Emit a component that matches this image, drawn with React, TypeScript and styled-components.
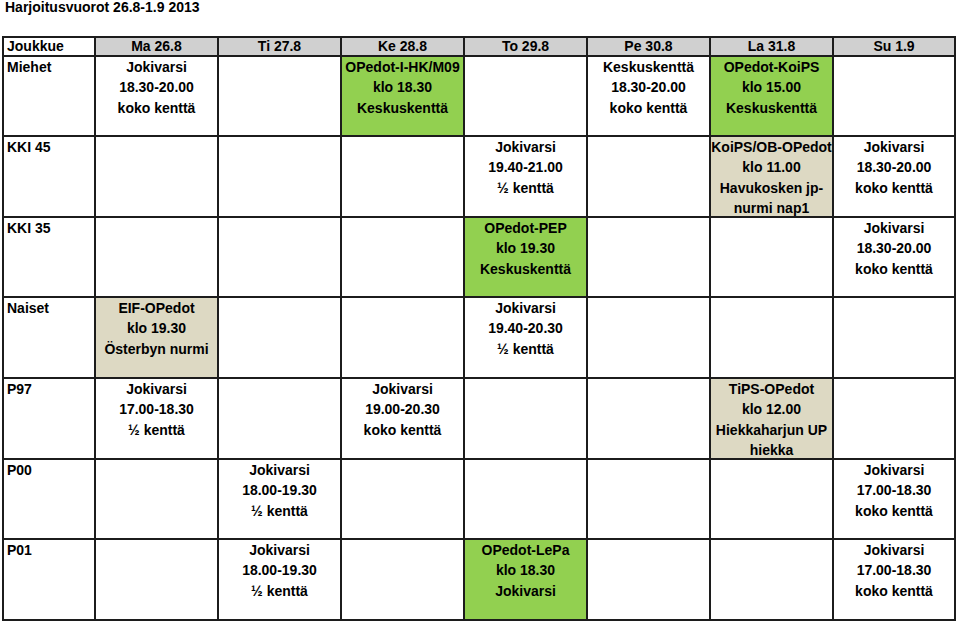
import { Fragment } from "react";
import styled, { createGlobalStyle } from "styled-components";

const GlobalStyle = createGlobalStyle`
  html, body {
    margin: 0;
    padding: 0;
    background: #ffffff;
  }
  body {
    font-family: "Liberation Sans", Arial, sans-serif;
    color: #000000;
  }
`;

const Page = styled.div`
  display: flex;
  flex-direction: column;
  align-items: flex-start;
  padding: 0 0 0 2px;
`;

const Title = styled.h1`
  margin: 0 0 22px 3px;
  font-size: 14px;
  line-height: 14px;
  font-weight: bold;
`;

const Grid = styled.div`
  display: grid;
  grid-template-columns: 92px repeat(6, 123px) 122px;
  grid-template-rows: 19px 80px 81px 80px 81px 81px 80px 81px;
  border-left: 2px solid #1c1c1c;
  border-top: 2px solid #1c1c1c;
`;

type Tone = "plain" | "green" | "tan" | "head";

const tones: Record<Tone, string> = {
  plain: "#ffffff",
  green: "#92d050",
  tan: "#ddd9c3",
  head: "#d0d0d0",
};

const Cell = styled.div<{ $tone: Tone; $left?: boolean }>`
  box-sizing: border-box;
  border-right: 2px solid #1c1c1c;
  border-bottom: 2px solid #1c1c1c;
  background: ${(p) => tones[p.$tone]};
  display: flex;
  flex-direction: column;
  align-items: ${(p) => (p.$left ? "flex-start" : "center")};
  padding-left: ${(p) => (p.$left ? "3px" : "0")};
  font-size: 14px;
  font-weight: bold;
  line-height: 20.3px;
  overflow: hidden;
`;

const HeadCell = styled(Cell)`
  line-height: 17px;
`;

const Line = styled.span`
  white-space: nowrap;
`;

interface Slot {
  lines: string[];
  tone?: Tone;
}

interface Team {
  name: string;
  slots: (Slot | null)[];
}

const days = ["Ma 26.8", "Ti 27.8", "Ke 28.8", "To 29.8", "Pe 30.8", "La 31.8", "Su 1.9"];

const jv = (time: string, field: string): Slot => ({ lines: ["Jokivarsi", time, field] });

const teams: Team[] = [
  {
    name: "Miehet",
    slots: [
      jv("18.30-20.00", "koko kenttä"),
      null,
      { lines: ["OPedot-I-HK/M09", "klo 18.30", "Keskuskenttä"], tone: "green" },
      null,
      { lines: ["Keskuskenttä", "18.30-20.00", "koko kenttä"] },
      { lines: ["OPedot-KoiPS", "klo 15.00", "Keskuskenttä"], tone: "green" },
      null,
    ],
  },
  {
    name: "KKI 45",
    slots: [
      null,
      null,
      null,
      jv("19.40-21.00", "½ kenttä"),
      null,
      { lines: ["KoiPS/OB-OPedot", "klo 11.00", "Havukosken jp-", "nurmi nap1"], tone: "tan" },
      jv("18.30-20.00", "koko kenttä"),
    ],
  },
  {
    name: "KKI 35",
    slots: [
      null,
      null,
      null,
      { lines: ["OPedot-PEP", "klo 19.30", "Keskuskenttä"], tone: "green" },
      null,
      null,
      jv("18.30-20.00", "koko kenttä"),
    ],
  },
  {
    name: "Naiset",
    slots: [
      { lines: ["EIF-OPedot", "klo 19.30", "Österbyn nurmi"], tone: "tan" },
      null,
      null,
      jv("19.40-20.30", "½ kenttä"),
      null,
      null,
      null,
    ],
  },
  {
    name: "P97",
    slots: [
      jv("17.00-18.30", "½ kenttä"),
      null,
      jv("19.00-20.30", "koko kenttä"),
      null,
      null,
      { lines: ["TiPS-OPedot", "klo 12.00", "Hiekkaharjun UP", "hiekka"], tone: "tan" },
      null,
    ],
  },
  {
    name: "P00",
    slots: [
      null,
      jv("18.00-19.30", "½ kenttä"),
      null,
      null,
      null,
      null,
      jv("17.00-18.30", "koko kenttä"),
    ],
  },
  {
    name: "P01",
    slots: [
      null,
      jv("18.00-19.30", "½ kenttä"),
      null,
      { lines: ["OPedot-LePa", "klo 18.30", "Jokivarsi"], tone: "green" },
      null,
      null,
      jv("17.00-18.30", "koko kenttä"),
    ],
  },
];

export default function App() {
  return (
    <>
      <GlobalStyle />
      <Page>
        <Title>Harjoitusvuorot 26.8-1.9 2013</Title>
        <Grid>
          <HeadCell $tone="plain" $left>
            Joukkue
          </HeadCell>
          {days.map((d) => (
            <HeadCell key={d} $tone="head">
              {d}
            </HeadCell>
          ))}
          {teams.map((team) => (
            <Fragment key={team.name}>
              <Cell $tone="plain" $left>
                {team.name}
              </Cell>
              {team.slots.map((slot, i) => (
                <Cell key={i} $tone={slot?.tone ?? "plain"}>
                  {slot?.lines.map((l) => (
                    <Line key={l}>{l}</Line>
                  ))}
                </Cell>
              ))}
            </Fragment>
          ))}
        </Grid>
      </Page>
    </>
  );
}
